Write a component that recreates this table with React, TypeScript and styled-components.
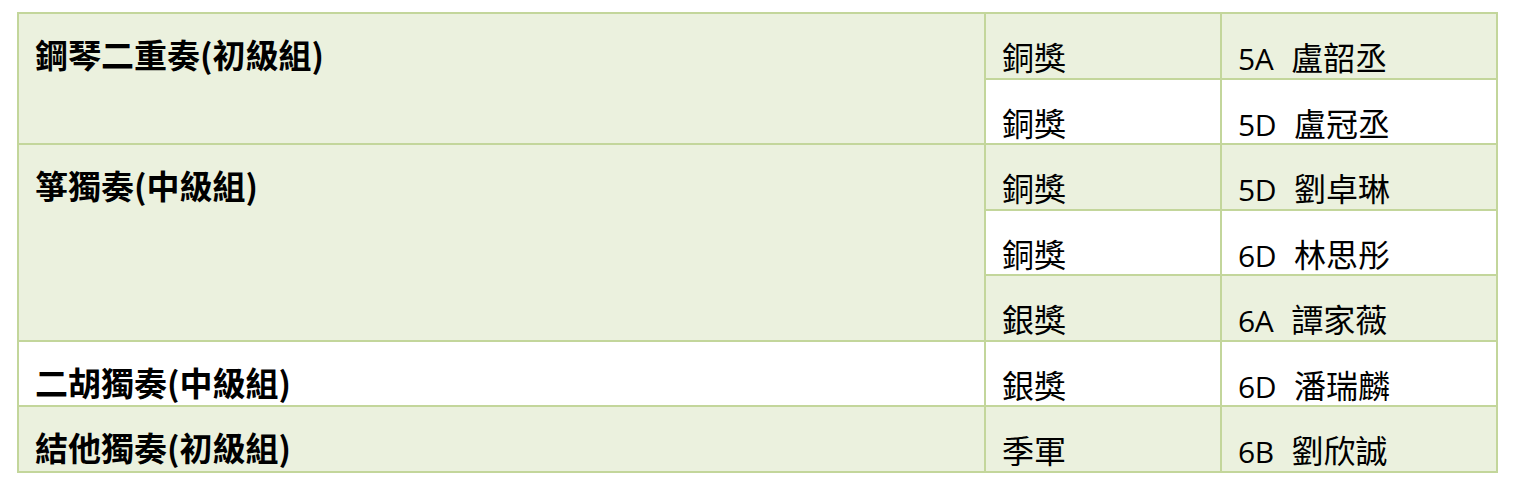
import React from 'react';
import styled, { createGlobalStyle } from 'styled-components';

const GlobalStyle = createGlobalStyle`
  html, body {
    margin: 0;
    padding: 0;
    background: #ffffff;
  }
`;

// Styles
const Page = styled.div`
  padding: 12px 0 0 17px;
`;

const AwardTable = styled.table`
  width: 1479px;
  border-collapse: collapse;
  table-layout: fixed;
  border: 2px solid #c3d69b;
  font-family: 'Noto Sans CJK TC', 'Noto Sans CJK SC', sans-serif;
  color: #000000;
`;

const Row = styled.tr<{ $shaded: boolean }>`
  height: 65.5px;
  background: ${(p) => (p.$shaded ? '#ebf1de' : '#ffffff')};
`;

const Cell = styled.td<{ $shaded?: boolean }>`
  border: 2px solid #c3d69b;
  padding: 26px 16px 0;
  vertical-align: top;
  font-size: 32px;
  line-height: 32px;
  font-weight: 400;
  white-space: nowrap;
  background: ${(p) => (p.$shaded === undefined ? 'transparent' : p.$shaded ? '#ebf1de' : '#ffffff')};
`;

const EventCell = styled(Cell)`
  padding-top: 24px;
  font-size: 33px;
  font-weight: 700;
`;

const ClassCode = styled.span`
  display: inline-block;
  margin-right: 18px;
  font-family: 'Open Sans', 'Liberation Sans', sans-serif;
  font-size: 30px;
  font-weight: 500;
  letter-spacing: -0.5px;
`;

interface Entry {
  award: string;
  cls: string;
  name: string;
}

interface Group {
  title: string;
  entries: Entry[];
}

const groups: Group[] = [
  {
    title: '鋼琴二重奏(初級組)',
    entries: [
      { award: '銅獎', cls: '5A', name: '盧韶丞' },
      { award: '銅獎', cls: '5D', name: '盧冠丞' },
    ],
  },
  {
    title: '箏獨奏(中級組)',
    entries: [
      { award: '銅獎', cls: '5D', name: '劉卓琳' },
      { award: '銅獎', cls: '6D', name: '林思彤' },
      { award: '銀獎', cls: '6A', name: '譚家薇' },
    ],
  },
  {
    title: '二胡獨奏(中級組)',
    entries: [{ award: '銀獎', cls: '6D', name: '潘瑞麟' }],
  },
  {
    title: '結他獨奏(初級組)',
    entries: [{ award: '季軍', cls: '6B', name: '劉欣誠' }],
  },
];

const App: React.FC = () => {
  let index = 0;
  const rows: React.ReactNode[] = [];

  groups.forEach((group) => {
    const groupShaded = index % 2 === 0;
    group.entries.forEach((entry, i) => {
      const shaded = index % 2 === 0;
      rows.push(
        <Row key={index} $shaded={shaded}>
          {i === 0 && (
            <EventCell rowSpan={group.entries.length} $shaded={groupShaded}>
              {group.title}
            </EventCell>
          )}
          <Cell>{entry.award}</Cell>
          <Cell>
            <ClassCode>{entry.cls}</ClassCode>
            {entry.name}
          </Cell>
        </Row>
      );
      index += 1;
    });
  });

  return (
    <Page>
      <GlobalStyle />
      <AwardTable>
        <colgroup>
          <col style={{ width: 967 }} />
          <col style={{ width: 236 }} />
          <col style={{ width: 276 }} />
        </colgroup>
        <tbody>{rows}</tbody>
      </AwardTable>
    </Page>
  );
};

export default App;
